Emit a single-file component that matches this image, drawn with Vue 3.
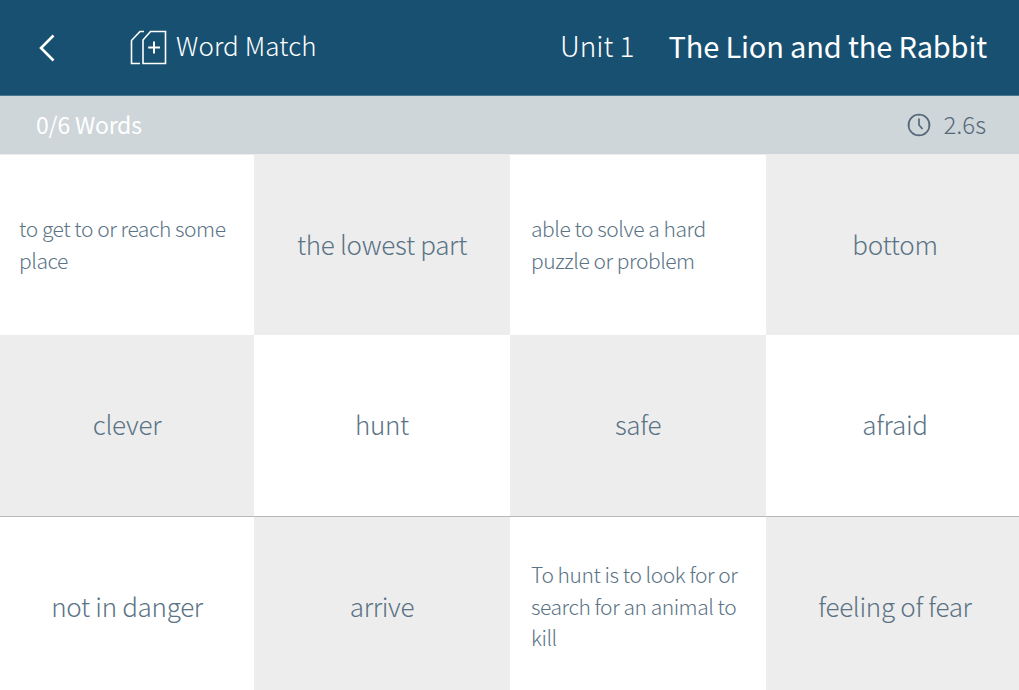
<template>
  <div class="page">
    <header class="topbar">
      <button class="back" aria-label="Back">
        <svg width="18" height="28" viewBox="0 0 18 28" fill="none" stroke="#fff" stroke-width="2.6">
          <path d="M15.500 1.500 3 14 15.500 26.500" />
        </svg>
      </button>
      <div class="activity">
        <svg width="38" height="36" viewBox="0 0 38 36" fill="none" stroke="#fff" stroke-width="1.6">
          <path d="M14 1.500H10L1.500 10.500V33.500H10" />
          <path d="M20.500 1.500H35.500V33.500H13V10Z" />
          <path d="M24 11.500V23.500M18.200 17.500H30" stroke-width="2" />
        </svg>
        <span>Word Match</span>
      </div>
      <div class="titles">
        <span class="unit">Unit 1</span>
        <span class="story">The Lion and the Rabbit</span>
      </div>
    </header>

    <div class="status">
      <span class="count">0/6 Words</span>
      <span class="timer">
        <svg width="24" height="24" viewBox="0 0 24 24" fill="none" stroke="#56697a" stroke-width="1.700">
          <circle cx="12" cy="12" r="10.500" />
          <path d="M12 5.500V12L15.500 16" />
          <path d="M12 1.500V3M12 21V22.500M1.500 12H3M21 12H22.500" stroke-width="1" />
        </svg>
        <span>2.6s</span>
      </span>
    </div>

    <main class="board">
      <div
        v-for="(row, r) in rows"
        :key="r"
        class="row"
        :class="{ divided: r === 2 }"
      >
        <div
          v-for="(card, c) in row"
          :key="c"
          class="card"
          :class="{ shaded: (r + c) % 2 === 1, long: card.long }"
        >
          <p>{{ card.text }}</p>
        </div>
      </div>
    </main>
  </div>
</template>

<script setup>
const rows = [
  [
    { text: 'to get to or reach some place', long: true },
    { text: 'the lowest part' },
    { text: 'able to solve a hard puzzle or problem', long: true },
    { text: 'bottom' }
  ],
  [
    { text: 'clever' },
    { text: 'hunt' },
    { text: 'safe' },
    { text: 'afraid' }
  ],
  [
    { text: 'not in danger' },
    { text: 'arrive' },
    { text: 'To hunt is to look for or search for an animal to kill', long: true },
    { text: 'feeling of fear' }
  ]
]
</script>

<style>
html,
body {
  margin: 0;
  background: #fff;
  overflow: hidden;
}
</style>

<style scoped>
.page {
  width: 1019px;
  height: 690px;
  overflow: hidden;
  display: flex;
  flex-direction: column;
  font-family: "Noto Sans CJK SC", "Noto Sans", sans-serif;
  font-weight: 300;
  color: #5a7385;
}

.topbar {
  height: 95px;
  flex: none;
  background: #175071;
  border-bottom: 1px solid #4c7690;
  color: #fff;
  display: flex;
  align-items: center;
  padding: 0 32px 0 38px;
}

.back {
  background: none;
  border: 0;
  padding: 0;
  display: flex;
  width: 92px;
}

.activity {
  display: flex;
  align-items: center;
  gap: 8px;
  font-size: 26px;
  letter-spacing: 0.1px;
}

.activity span,
.titles {
  margin-bottom: 6px;
}

.titles {
  margin-left: auto;
  display: flex;
  align-items: center;
  gap: 34px;
}

.unit {
  font-size: 28px;
}

.story {
  font-size: 29px;
  font-weight: 400;
  letter-spacing: -0.15px;
}

.status {
  height: 58px;
  flex: none;
  background: #ced6da;
  display: flex;
  align-items: center;
  justify-content: space-between;
  padding: 0 33px 0 36px;
}

.count {
  color: #fff;
  font-size: 23px;
  font-weight: 400;
  letter-spacing: -0.2px;
  margin-bottom: 3px;
}

.timer {
  display: flex;
  align-items: center;
  gap: 12px;
  font-size: 24px;
  color: #56697a;
}

.timer span {
  margin-bottom: 3px;
}

.board {
  flex: 1;
  border-top: 1px solid #ececec;
  display: flex;
  flex-direction: column;
}

.row {
  height: 180px;
  flex: none;
  display: grid;
  grid-template-columns: 254px 256px 256px 258px;
}

.row:nth-child(2) {
  height: 181px;
}

.row.divided {
  border-top: 1px solid #b8b8b8;
}

.card {
  display: flex;
  align-items: center;
  justify-content: center;
  text-align: center;
  background: #fff;
  font-size: 26px;
  letter-spacing: -0.3px;
  padding-bottom: 4px;
  box-sizing: border-box;
}

.card.shaded {
  background: #ededed;
}

.card p {
  margin: 0;
}

.card.long {
  justify-content: flex-start;
  text-align: left;
  padding: 0 18px 1px 21px;
  font-size: 21px;
  letter-spacing: -0.45px;
  line-height: 31.5px;
}

.card.long:first-child {
  padding-left: 19px;
}
</style>
